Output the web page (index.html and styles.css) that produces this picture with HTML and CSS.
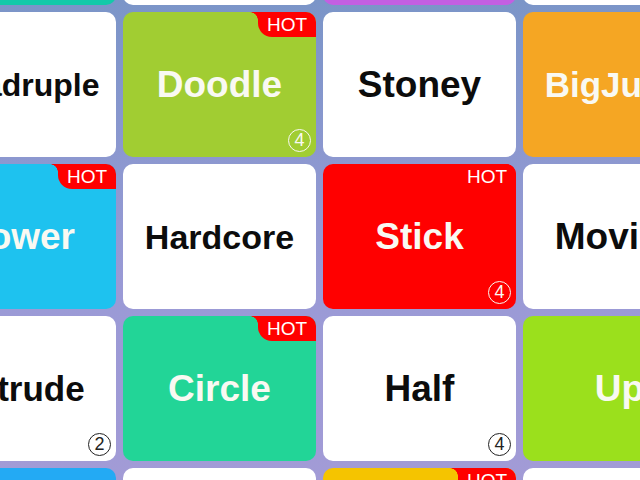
FILE: index.html
```html
<!DOCTYPE html>
<html lang="en">
<head>
<meta charset="utf-8">
<title>Levels</title>
<link rel="stylesheet" href="styles.css">
</head>
<body>
<main class="board">
  <!-- row 0 -->
  <div class="tile teal"></div>
  <div class="tile white"><span class="num">4</span></div>
  <div class="tile purple"><span class="num">4</span></div>
  <div class="tile white"></div>

  <!-- row 1 -->
  <div class="tile white"><span class="name fit-s">Quadruple</span></div>
  <div class="tile green"><span class="hot">HOT</span><span class="name">Doodle</span><span class="num">4</span></div>
  <div class="tile white"><span class="name">Stoney</span></div>
  <div class="tile orange"><span class="name fit-m">BigJump</span></div>

  <!-- row 2 -->
  <div class="tile cyan"><span class="hot">HOT</span><span class="name">Power</span></div>
  <div class="tile white"><span class="name fit-l">Hardcore</span></div>
  <div class="tile red"><span class="hot">HOT</span><span class="name">Stick</span><span class="num">4</span></div>
  <div class="tile white"><span class="name">Moving</span></div>

  <!-- row 3 -->
  <div class="tile white"><span class="name fit-m">Extrude</span><span class="num">2</span></div>
  <div class="tile mint"><span class="hot">HOT</span><span class="name">Circle</span></div>
  <div class="tile white"><span class="name">Half</span><span class="num">4</span></div>
  <div class="tile lime"><span class="name">Up</span></div>

  <!-- row 4 -->
  <div class="tile blue"></div>
  <div class="tile white"></div>
  <div class="tile yellow"><span class="hot">HOT</span></div>
  <div class="tile white"></div>
</main>
</body>
</html>
```

FILE: styles.css
```css
html, body {
  margin: 0;
  width: 640px;
  height: 480px;
  overflow: hidden;
}

body {
  background: linear-gradient(180deg, #7b95c8 0%, #9a9ad6 60%, #a29bd6 100%);
  font-family: "Liberation Sans", Arial, sans-serif;
}

/* level grid, scrolled so the first row sits mostly above the view */
.board {
  display: grid;
  grid-template-columns: repeat(4, 193px);
  grid-auto-rows: 145px;
  gap: 7px;
  margin: -140px 0 0 -77px;
}

.tile {
  position: relative;
  border-radius: 10px;
  display: flex;
  align-items: center;
  justify-content: center;
  color: #f9f9f2;
}

.white  { background: #ffffff; color: #0c0c0c; }
.teal   { background: #13c9a9; }
.purple { background: #c35fe2; }
.green  { background: #a1cd32; }
.orange { background: #f5a623; }
.cyan   { background: #1ec2ef; }
.red    { background: #ff0000; }
.mint   { background: #22d597; }
.lime   { background: #9be01c; }
.blue   { background: #23aaf4; }
.yellow { background: #f5c400; }

.name {
  font-weight: bold;
  font-size: 37px;
  line-height: 1;
  white-space: nowrap;
}

/* longer names shrink to fit the tile */
.fit-l { font-size: 34px; }
.fit-m { font-size: 35px; }
.fit-s { font-size: 32px; }

/* corner tag */
.hot {
  position: absolute;
  top: 0;
  right: 0;
  width: 58px;
  height: 25px;
  background: #ff0000;
  border-radius: 0 10px 0 14px;
  color: #ffffff;
  font-size: 19px;
  line-height: 25px;
  text-align: center;
}

.hot::before {
  content: "";
  position: absolute;
  top: 0;
  left: -8px;
  width: 8px;
  height: 8px;
  background: radial-gradient(circle at 0 100%, transparent 7.5px, #ff0000 8px);
}

/* circled step count */
.num {
  position: absolute;
  right: 5px;
  bottom: 5px;
  width: 21px;
  height: 21px;
  border: 1.7px solid currentColor;
  border-radius: 50%;
  font-size: 18px;
  line-height: 21px;
  text-align: center;
  color: inherit;
}

.white .num { color: #222222; }
```
